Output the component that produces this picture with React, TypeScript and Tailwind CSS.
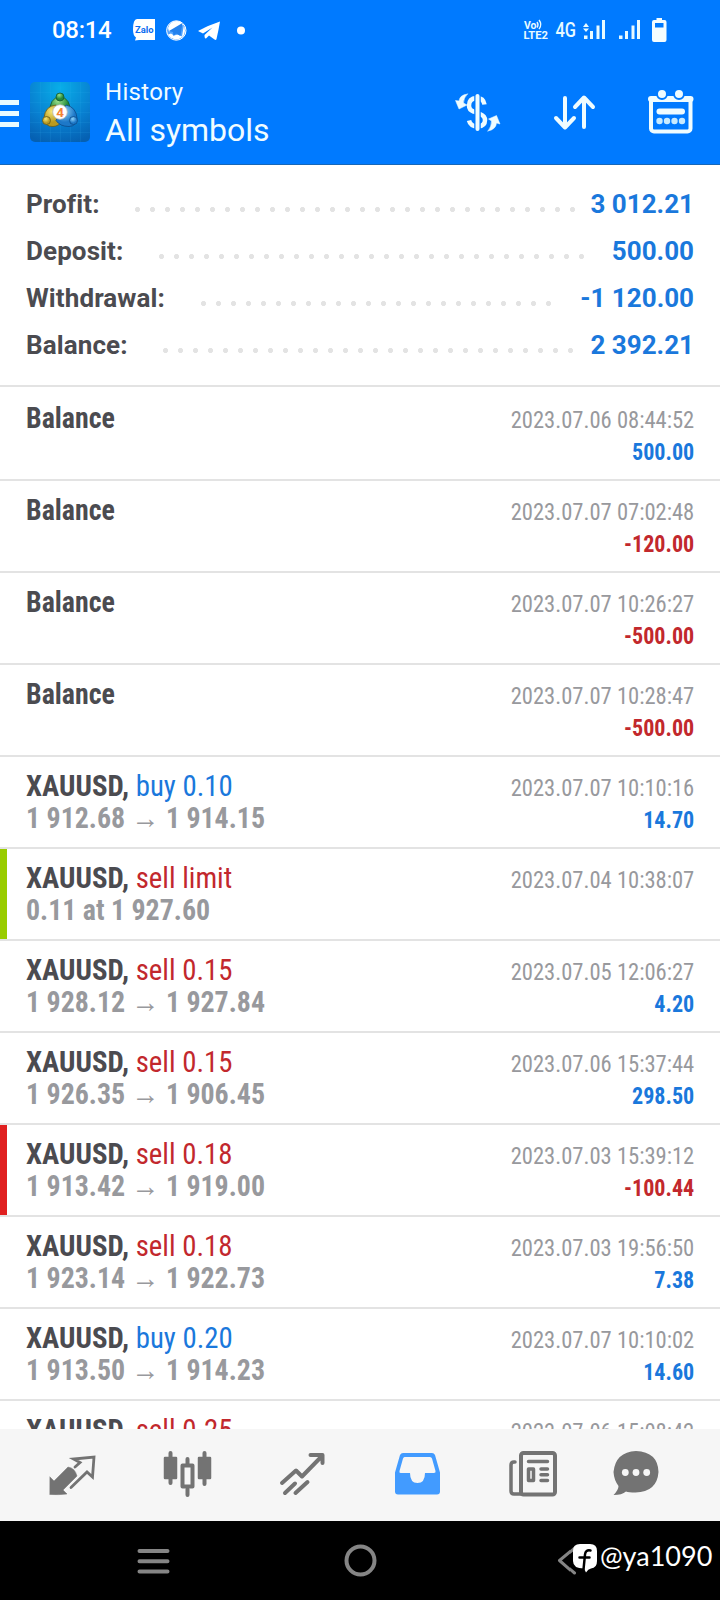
import React from "react";

type Tone = "blue" | "red";

interface Entry {
  symbol: string;
  action?: string;
  tone?: Tone;
  detail?: string;
  date: string;
  amount?: string;
  marker?: "green" | "red";
}

const entries: Entry[] = [
  { symbol: "Balance", date: "2023.07.06 08:44:52", amount: "500.00" },
  { symbol: "Balance", date: "2023.07.07 07:02:48", amount: "-120.00" },
  { symbol: "Balance", date: "2023.07.07 10:26:27", amount: "-500.00" },
  { symbol: "Balance", date: "2023.07.07 10:28:47", amount: "-500.00" },
  { symbol: "XAUUSD,", action: "buy 0.10", tone: "blue", detail: "1 912.68 → 1 914.15", date: "2023.07.07 10:10:16", amount: "14.70" },
  { symbol: "XAUUSD,", action: "sell limit", tone: "red", detail: "0.11 at 1 927.60", date: "2023.07.04 10:38:07", marker: "green" },
  { symbol: "XAUUSD,", action: "sell 0.15", tone: "red", detail: "1 928.12 → 1 927.84", date: "2023.07.05 12:06:27", amount: "4.20" },
  { symbol: "XAUUSD,", action: "sell 0.15", tone: "red", detail: "1 926.35 → 1 906.45", date: "2023.07.06 15:37:44", amount: "298.50" },
  { symbol: "XAUUSD,", action: "sell 0.18", tone: "red", detail: "1 913.42 → 1 919.00", date: "2023.07.03 15:39:12", amount: "-100.44", marker: "red" },
  { symbol: "XAUUSD,", action: "sell 0.18", tone: "red", detail: "1 923.14 → 1 922.73", date: "2023.07.03 19:56:50", amount: "7.38" },
  { symbol: "XAUUSD,", action: "buy 0.20", tone: "blue", detail: "1 913.50 → 1 914.23", date: "2023.07.07 10:10:02", amount: "14.60" },
  { symbol: "XAUUSD,", action: "sell 0.25", tone: "red", date: "2023.07.06 15:08:42" },
];

const summary = [
  { label: "Profit:", value: "3 012.21", dots: "w-[450px]", labelWidth: "w-[104px]" },
  { label: "Deposit:", value: "500.00", dots: "w-[435px]", labelWidth: "w-[128px]" },
  { label: "Withdrawal:", value: "-1 120.00", dots: "w-[360px]", labelWidth: "w-[170px]" },
  { label: "Balance:", value: "2 392.21", dots: "w-[420px]", labelWidth: "w-[132px]" },
];

function StatusBar() {
  return (
    <div className="flex h-[60px] items-center text-white">
      <span className="ml-[52px] w-[59px] text-[24px] leading-[62px] tracking-[-0.3px] font-medium">08:14</span>
      <svg className="ml-[20px]" width="120" height="60" viewBox="131 0 120 60">
        <path d="M137 19h18v21h-16l-4 .500 1-3q-3-2-3-8 0-10.500 4-10.500z" fill="#fff" />
        <text x="135" y="32.500" fontSize="9" fontWeight="700" fill="#0a6cf0" textLength="18.500" lengthAdjust="spacingAndGlyphs" fontFamily="Roboto">Zalo</text>
        <circle cx="176.300" cy="30.500" r="9.700" fill="#4fa2ff" stroke="#fff" strokeWidth="1" />
        <path d="M168 28q2-7 9-7 8 1 8 10-1 8-9 8.500-6-1-8-5l3-1 3 2 4-1 4 2 2-12-15 7z" fill="#fff" />
        <path d="M169 31l13.500-8-2 13-4.500-2.500-2.500 2.500-.500-4z" fill="#2381ed" />
        <path d="M198 31q11-6 22-9.500-1.500 9-3.500 17.500-.500 1.500-2 .500l-5.500-4-3 3q-1.500.500-1.500-3.500l8-7.500-9.500 6z" fill="#fff" />
        <circle cx="241" cy="30.500" r="4" fill="#fff" />
      </svg>
      <svg className="ml-auto mr-[50px]" width="150" height="60" viewBox="520 0 150 60">
        <g fill="#e8faff" fontFamily="Roboto" fontWeight="500">
          <text x="524" y="28.500" fontSize="10.500" fontWeight="700" textLength="12.500" lengthAdjust="spacingAndGlyphs">Vo</text>
          <text x="523.500" y="39" fontSize="11" fontWeight="700" textLength="24.500" lengthAdjust="spacingAndGlyphs">LTE2</text>
          <text x="555.500" y="37" fontSize="20" textLength="20.500" lengthAdjust="spacingAndGlyphs">4G</text>
        </g>
        <path d="M537 22q2 3 0 5.500M539 20q3.500 4.500 0 9" stroke="#e8faff" strokeWidth="1.400" fill="none" />
        <path d="M586 23l3 4h-6zM586 32l3-3.500h-6zM584 35.500h3.500V39H584zM590 31h3v8h-3zM596.500 25.500h3V39h-3zM602 20h3v19h-3zM619 35.500h3.500V39H619zM625 31h3v8h-3zM631.500 25.500h3V39h-3zM637 20h3v19h-3z" fill="#e8faff" />
        <path d="M656.500 18h5.500v2h2.500q2 0 2 2v18q0 2-2 2H654q-2 0-2-2V22q0-2 2-2h2.500zM655 23v4.500h8.500V23z" fill="#f4fdff" fillRule="evenodd" />
      </svg>
    </div>
  );
}

function AppLogo() {
  return (
    <svg width="60" height="60" viewBox="0 0 60 60">
      <defs>
        <radialGradient id="tile" cx="50%" cy="10%" r="95%">
          <stop offset="0" stopColor="#08aee8" />
          <stop offset="0.600" stopColor="#087fd0" />
          <stop offset="1" stopColor="#0560b2" />
        </radialGradient>
        <radialGradient id="green" cx="40%" cy="25%"><stop offset="0" stopColor="#9be08a" /><stop offset="1" stopColor="#238a3c" /></radialGradient>
        <radialGradient id="gold" cx="40%" cy="30%"><stop offset="0" stopColor="#f5e676" /><stop offset="1" stopColor="#b99a20" /></radialGradient>
        <radialGradient id="sky" cx="40%" cy="30%"><stop offset="0" stopColor="#8fd2f8" /><stop offset="1" stopColor="#1d78c8" /></radialGradient>
      </defs>
      <rect width="60" height="60" rx="5" fill="url(#tile)" />
      <path d="M0 10.500h60M0 20.500h60M0 30.500h60M0 40.500h60M0 50.500h60M10.500 0v60M20.500 0v60M30.500 0v60M40.500 0v60M50.500 0v60" stroke="#35b5ef" strokeOpacity="0.130" />
      <g strokeWidth="0.800">
        <path d="M20 30q-1-13 10-16 11 3 10 16l-7 4z" fill="url(#green)" stroke="#14592e" />
        <path d="M26 23q-11 1-12 13 1 9 9 8.500 6 0 10-7z" fill="url(#gold)" stroke="#665b1a" />
        <path d="M36 23q10 2 11 13 0 8-8 8.500-9 0-13-6z" fill="url(#sky)" stroke="#0a4a8a" />
        <circle cx="30" cy="15" r="4" fill="url(#green)" stroke="#14592e" />
        <circle cx="16.500" cy="38.500" r="4" fill="url(#gold)" stroke="#665b1a" />
        <circle cx="43.500" cy="38.500" r="4" fill="url(#sky)" stroke="#0a4a8a" />
        <circle cx="30" cy="30" r="7.300" fill="#fff" stroke="#b9b9b9" />
      </g>
      <text x="30" y="35" textAnchor="middle" fontSize="13.500" fontWeight="700" fill="#f58232" fontFamily="Roboto">4</text>
    </svg>
  );
}

function Header() {
  return (
    <header className="h-[165px] shrink-0 border-b border-[#1767b8] bg-[#007aff]">
      <StatusBar />
      <div className="flex h-[103px] text-white">
        <div className="mt-[40px] flex w-[19px] flex-col gap-[6px]">
          <span className="h-[5px] bg-[#e8faff]" />
          <span className="h-[5px] bg-[#e8faff]" />
          <span className="h-[5px] bg-[#e8faff]" />
        </div>
        <div className="ml-[11px] mt-[22px]"><AppLogo /></div>
        <div className="ml-[15px] mt-[16px] text-[#f0fcff]">
          <div className="text-[24px] leading-[32px] tracking-[0.3px]">History</div>
          <div className="mt-[2px] text-[32px] leading-[40px]">All symbols</div>
        </div>
        <svg className="ml-auto mr-[20px]" width="250" height="103" viewBox="450 60 250 103" fill="none" stroke="#effcff" strokeWidth="4" strokeLinecap="round" strokeLinejoin="round">
          <path d="M484.500 104.500q-1-6.500-8-6.500-7.500.500-7.500 7.500 0 4.500 4.500 6l6.500 2.500q5 2 5 6 0 6-7 6.500-7.500 0-9-6" strokeWidth="4.500" strokeLinecap="butt" />
          <path d="M477.500 96v33" stroke="#007aff" strokeWidth="6.500" strokeLinecap="butt" />
          <path d="M477.500 96v33" />
          <path d="M467.500 94q-8 1-8.500 7l-3.500-.500 3.500 8.500 8-4-3.500-2q0-5 4-9zM488 131q8-1.500 8.500-8l3.500 1-3.500-8.500-8 3.500 3 2q0 5.500-3.500 10z" fill="#effcff" strokeWidth="0.500" />
          <path d="M565 98v29M556 118l9 9.500 9-9.500M584 127V98M575 107l9-9.500 9 9.500" />
          <rect x="651" y="98" width="39.500" height="33.500" rx="3" />
          <path d="M651 99h39.500" strokeWidth="6" />
          <g stroke="#007aff" strokeWidth="2" fill="#effcff"><circle cx="662" cy="94" r="5" /><circle cx="679" cy="94" r="5" /></g>
          <path d="M659.500 111.500h22.500" strokeWidth="6" />
          <g fill="#c8ebff" stroke="none"><circle cx="659.500" cy="121" r="3.200" /><circle cx="667" cy="121" r="3.200" /><circle cx="674.500" cy="121" r="3.200" /><circle cx="682" cy="121" r="3.200" /></g>
        </svg>
      </div>
    </header>
  );
}

function Summary() {
  return (
    <section className="h-[224px] shrink-0 pb-[2px]">
      <div className="flex h-[222px] flex-col border-b-2 border-[#e3e3e3] px-[26px] pt-[16px]">
        {summary.map((s) => (
          <div key={s.label} className="flex h-[47px] items-center text-[26px] font-bold leading-[47px]">
            <span className={`${s.labelWidth} tracking-[0.1px] text-[#4b4b50]`}>{s.label}</span>
            <span className={`${s.dots} mt-[10px] h-[15px] bg-[radial-gradient(circle_at_center,#e3e3e3_2.2px,transparent_2.9px)] bg-[length:15px_15px]`} />
            <span className="ml-auto text-[#1a78dc]">{s.value}</span>
          </div>
        ))}
      </div>
    </section>
  );
}

const markers = { green: "w-[7px] bg-[#99cc00]", red: "w-[7px] bg-[#e02020]", none: "w-[7px]" };

function Row({ e }: { e: Entry }) {
  return (
    <li className="flex h-[92px] shrink-0 border-b-2 border-[#e3e3e3] font-['Roboto_Condensed','Roboto',sans-serif]">
      <span className={markers[e.marker ?? "none"]} />
      <div className="ml-[19px] mt-[13px] text-[30px] leading-[32px]">
        <div className={e.action ? "origin-left scale-x-[0.96]" : "origin-left scale-x-[0.93]"}>
          <span className="font-bold text-[#4b4b50]">{e.symbol}</span>{" "}
          <span className={e.tone === "blue" ? "text-[#1a78dc]" : "text-[#c2282d]"}>{e.action}</span>
        </div>
        <div className="origin-left scale-x-[0.93] font-bold text-[#98999d]">{e.detail}</div>
      </div>
      <div className="ml-auto mr-[26px] mt-[15px] text-right text-[24px] leading-[32px]">
        <div className="origin-right scale-x-[0.94] text-[#98999d]">{e.date}</div>
        <div className={e.amount?.startsWith("-") ? "origin-right scale-x-[0.92] font-bold text-[#c2282d]" : "origin-right scale-x-[0.92] font-bold text-[#1a78dc]"}>{e.amount}</div>
      </div>
    </li>
  );
}

function TabBar() {
  return (
    <nav className="h-[92px] shrink-0 bg-[#f6f6f6]">
      <svg width="720" height="92" viewBox="0 1429 720 92" fill="none" stroke="#737373" strokeLinecap="round" strokeLinejoin="round">
        <path d="M50 1477l4 4 14-14q7 1 9 9l-14 14 4 4q-8 1-17 .500z" fill="#737373" strokeWidth="0.500" />
        <path d="M75 1467l5-4.500-6.500-3.500 20.500-2-1.500 20-5.500-5-16 15.500" strokeWidth="2.800" strokeLinejoin="miter" />
        <path d="M170.500 1453v30M204.500 1453v31M187.500 1459v6M187.500 1489v6" strokeWidth="4" />
        <path d="M165 1458h11v20h-11zM199 1458h11v20h-11z" fill="#737373" strokeWidth="2.500" />
        <rect x="182.500" y="1465.500" width="10" height="21" strokeWidth="4" />
        <path d="M282 1483l14-12.500 6 6 20-20.500M310.500 1455h12v8M285 1493l10-9.500M295.500 1493l12-11" strokeWidth="4" />
        <path d="M403 1453h29q2 0 3 2l5 17.500v19q0 3-3 3h-39q-3 0-3-3v-19l5-17.500q1-2 3-2zM404.500 1457q-1 0-1.500 1.500l-3.500 12.500q-.500 2 1 2h9.500q0 10 7.500 10t7.500-10h9q2 0 1.500-2l-3.500-12.500q-.500-1.500-2-1.500z" fill="#429bff" fillRule="evenodd" stroke="none" />
        <path d="M521 1494h-7q-3 0-3-3v-26q0-3 3-3h1" strokeWidth="3.500" />
        <rect x="521" y="1453" width="34" height="41.500" rx="2.500" strokeWidth="4" />
        <path d="M528.500 1461.500h19M541 1469h6.500M541 1474.800h6.500M541 1480.500h6.500" strokeWidth="3.500" />
        <rect x="528.500" y="1469" width="5" height="11.500" strokeWidth="3.500" />
        <path d="M636 1451q22 1 22.500 21-1.500 20-23 20.500-7 0-9.500-1-4 3.500-12.500 3.500 5-5 5-9-4.500-6-5-14 2-20 22.500-21z" fill="#737373" stroke="none" />
        <g fill="#f6f6f6" stroke="none"><circle cx="625.300" cy="1472.500" r="3.400" /><circle cx="636" cy="1472.500" r="3.400" /><circle cx="646.700" cy="1472.500" r="3.400" /></g>
      </svg>
    </nav>
  );
}

function SystemNav() {
  return (
    <footer className="flex h-[79px] shrink-0 bg-black">
      <svg width="570" height="79" viewBox="0 1521 570 79" fill="none" stroke="#858585" strokeWidth="4" strokeLinecap="round">
        <path d="M139.500 1551h28M139.500 1561.300h28M139.500 1571.600h28" />
        <circle cx="360.500" cy="1560.500" r="14" />
        <path d="M572 1550l-12.500 10.500 12.500 11" strokeWidth="3" strokeLinejoin="round" />
      </svg>
      <svg width="30" height="79" viewBox="570 1521 30 79" fill="none">
        <path d="M560 1560.500l15.500-13M560 1560.500l14.500 12.500" stroke="#858585" strokeWidth="3" strokeLinecap="round" />
        <path d="M580 1544h10q7 0 7 7v10q0 7-6 7.500-3 .500-5 4l-2-4q-11 0-11-7.500v-10q0-7 7-7z" fill="#fff" />
        <path d="M590.500 1550.500q-5-1-5.500 4l-1.500 15M579.500 1557.500h10" stroke="#000" strokeWidth="2.500" strokeLinecap="round" />
      </svg>
      <span className="mt-[17px] whitespace-nowrap font-['Lato',sans-serif] text-[27px] leading-[36px] text-white">@ya1090</span>
    </footer>
  );
}

export default function App() {
  return (
    <div className="flex h-[1600px] w-[720px] flex-col overflow-hidden bg-white font-['Roboto',sans-serif]">
      <Header />
      <Summary />
      <ul className="flex min-h-0 flex-1 flex-col overflow-hidden">
        {entries.map((e, i) => <Row key={i} e={e} />)}
      </ul>
      <TabBar />
      <SystemNav />
    </div>
  );
}
